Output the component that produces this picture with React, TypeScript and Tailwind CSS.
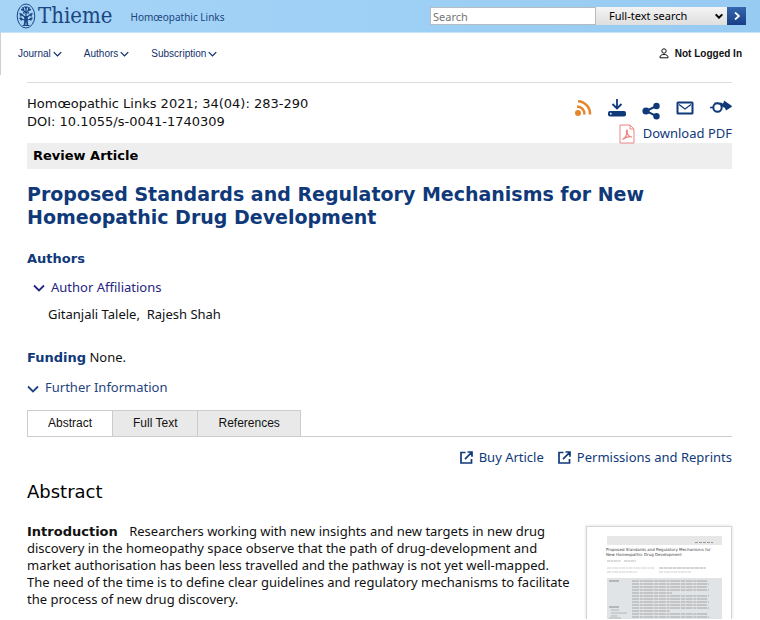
import React from "react";

const navItems = ["Journal", "Authors", "Subscription"];
const tabs = ["Abstract", "Full Text", "References"];

interface ChevronProps {
  className?: string;
}

const Chevron: React.FC<ChevronProps> = ({ className = "" }) => (
  <svg
    viewBox="0 0 12 8"
    fill="none"
    stroke="currentColor"
    strokeWidth="1.8"
    className={className}
    aria-hidden="true"
  >
    <path d="M1 1.5 6 6.5 11 1.5" />
  </svg>
);

const ExternalIcon = () => (
  <svg
    viewBox="0 0 13 13"
    fill="none"
    stroke="currentColor"
    strokeWidth="1.7"
    className="size-[13px]"
    aria-hidden="true"
  >
    <path d="M5.5 1.5H1v10.500h10.500V8M7.500 1H12v4.800M12 1 5 8.200" />
  </svg>
);

const TreeLogo = () => (
  <svg
    viewBox="0 0 20 26"
    fill="none"
    stroke="#1b4580"
    className="h-[26px] w-5"
    aria-hidden="true"
  >
    <ellipse cx="10" cy="13" rx="8.8" ry="12" strokeWidth="1" />
    <path d="M8.500 22c1-3 .8-6 .6-9M11.500 22c-1-3-.8-6-.6-9" strokeWidth="1.8" />
    <path
      d="M10 18V4M10 15 5 11M10 15l5-4M10 10 6 6M10 10l4-4M9 17l-5-1M11 17l5-1M6.500 22.500h7"
      strokeWidth="1.2"
    />
    <path
      d="M3.500 10.500l2 1-1 2M16.500 10.500l-2 1 1 2M5 6.500l2.500.5L7 4M15 6.500l-2.500.5.5-3M8.500 3.500 10 5l1.500-1.500M3.500 15l2 .5-.5 2M16.500 15l-2 .5.5 2M7 9.500l1.500 1M13 9.500l-1.500 1"
      strokeWidth="1.5"
    />
  </svg>
);

const Header = () => (
  <header className="flex h-8 items-center justify-between bg-linear-to-r from-[#a5d4f7] to-[#98cbf2] pr-3.5 pl-4 shadow-[0_1px_0_#c9e3f8]">
    <a href="#" className="flex items-center text-[#1b4580]">
      <TreeLogo />
      <span className="ml-0.5 font-['DejaVu_Serif_Condensed','DejaVu_Serif',serif] text-[22px] leading-8">
        Thieme
      </span>
      <span className="mt-0.5 ml-[18px] text-[10px]">Homœopathic Links</span>
    </a>
    <form className="flex items-center">
      <input
        type="text"
        aria-label="Search"
        placeholder="Search"
        className="h-[18px] w-[166px] border border-[#b5bcc4] bg-white px-0.5 text-[11px] placeholder:text-[#757575]"
      />
      <div className="relative flex">
        <select
          aria-label="Search scope"
          className="h-[18px] w-[131px] appearance-none bg-linear-to-b from-[#f4f4f4] to-[#dedede] pb-0.5 pl-[13px] text-[11px] text-black"
        >
          <option>Full-text search</option>
        </select>
        <Chevron className="pointer-events-none absolute top-1.5 right-1 h-1.5 w-2 stroke-3 text-black" />
      </div>
      <button
        type="button"
        aria-label="Start search"
        className="flex h-[18px] w-[19px] items-center justify-center bg-linear-to-b from-[#3467ad] to-[#173f86] text-white"
      >
        <svg
          viewBox="0 0 6 8"
          fill="none"
          stroke="currentColor"
          strokeWidth="1.8"
          className="h-2 w-1.5"
        >
          <path d="M1 .5 5 4 1 7.500" />
        </svg>
      </button>
    </form>
  </header>
);

const NavBar = () => (
  <nav className="flex h-[43px] items-center justify-between border-l border-[#cfcfcf] pr-[18px] pl-[17px] font-['Liberation_Sans',Arial,sans-serif] text-[10px]">
    <div className="flex gap-[22px] text-[#12306b]">
      {navItems.map((item) => (
        <button key={item} type="button" className="flex items-center gap-0.5">
          {item}
          <Chevron className="h-1.5 w-[9px]" />
        </button>
      ))}
    </div>
    <a href="#" className="flex items-center gap-1.5 font-bold text-[#111]">
      <svg
        viewBox="0 0 10 11"
        fill="none"
        stroke="currentColor"
        className="h-[11px] w-2.5"
        aria-hidden="true"
      >
        <circle cx="5" cy="3" r="2.200" />
        <path d="M1 9.800V9c0-1.500 1.500-2.500 4-2.500S9 7.500 9 9v.8z" />
      </svg>
      Not Logged In
    </a>
  </nav>
);

const ArticleActions = () => (
  <div className="flex flex-col items-end text-[#10397a]">
    <div className="flex h-[26px] items-center gap-4">
      <a href="#" aria-label="RSS feed" className="text-[#e5862c]">
        <svg
          viewBox="0 0 18 18"
          fill="none"
          stroke="currentColor"
          strokeWidth="2.500"
          className="size-[18px]"
        >
          <circle cx="4" cy="14" r="3" fill="currentColor" stroke="none" />
          <path d="M3 7.500a7.500 7.500 0 0 1 7.500 8M4 2.200a12.500 12.500 0 0 1 12 13.300" />
        </svg>
      </a>
      <a href="#" aria-label="Export citation">
        <svg viewBox="0 0 18 18" fill="none" stroke="currentColor" className="size-[18px]">
          <path d="M9 0v9M4.500 5 9 9.500 13.500 5" strokeWidth="1.800" />
          <rect x="0" y="12" width="18" height="5.500" rx="2" fill="currentColor" stroke="none" />
          <circle cx="2.800" cy="14.700" r=".9" fill="#fff" stroke="none" />
        </svg>
      </a>
      <a href="#" aria-label="Share" className="mt-1.5">
        <svg viewBox="0 0 18 18" fill="currentColor" className="size-[18px]">
          <path d="M14.500 4 4 9l10.500 5.200" fill="none" stroke="currentColor" strokeWidth="2" />
          <circle cx="14.500" cy="4" r="3.200" />
          <circle cx="4" cy="9" r="3.600" />
          <circle cx="14.500" cy="14.200" r="3.200" />
        </svg>
      </a>
      <a href="#" aria-label="Email">
        <svg viewBox="0 0 18 14" fill="none" stroke="currentColor" className="h-3.5 w-[18px]">
          <rect x="1.500" y="1.500" width="15" height="11" rx=".5" strokeWidth="2" />
          <path d="M3 3.500 9 8l6-4.500" strokeWidth="1.200" />
        </svg>
      </a>
      <a href="#" aria-label="Alerts">
        <svg viewBox="0 0 22 16" fill="none" stroke="currentColor" className="-mt-0.5 h-4 w-[22px]">
          <path
            d="M14 1.500 22 7l-.5 1-5.500 3.500L15 9l-3-1.500-1-2.500 2.500-1z"
            fill="currentColor"
            stroke="none"
          />
          <circle cx="7.500" cy="8.500" r="4.200" strokeWidth="2" />
          <path d="M0 8.500h3M4.500 4.200 12 4.500" strokeWidth="1.600" />
        </svg>
      </a>
    </div>
    <a href="#" className="flex h-6 items-center gap-2">
      <svg
        viewBox="0 0 16 20"
        fill="none"
        stroke="#ed8582"
        className="mt-0.5 h-5 w-4"
        aria-hidden="true"
      >
        <path d="M1 1h10l4 4v14H1zM11 1v4h4" />
        <path
          d="M3.500 15.500c3-1.500 4.500-5 4-8.500-.2-1.500 1.200-1 .8.500-.6 3 2 5.500 4.700 5.500-2.500-1-6 0-9.500 2.500z"
          strokeWidth="1.200"
        />
      </svg>
      Download PDF
    </a>
  </div>
);

const titleLines = [
  { y: 24, text: "Proposed Standards and Regulatory Mechanisms for" },
  { y: 29, text: "New Homeopathic Drug Development" },
];

// dash patterns stand in for the small print of the first page
const PagePreview = () => (
  <a
    href="#"
    aria-label="Article preview"
    className="block w-[146px] shrink-0 border border-b-0 border-[#d5d5d5] bg-white shadow-[0_0_3px_#ddd]"
  >
    <svg viewBox="0 0 144 92" className="block h-auto w-full">
      <rect x="20" y="9" width="115" height="9" fill="#e7e7e7" />
      <path d="M108 15.500h18" stroke="#999" strokeDasharray="3 1" />
      {titleLines.map(({ y, text }) => (
        <text
          key={y}
          x="19"
          y={y}
          fill="#444"
          className="font-['DejaVu_Sans',sans-serif] text-[4px]"
        >
          {text}
        </text>
      ))}
      <path d="M20 34h14M37 34h12" stroke="#b5b5b5" strokeDasharray="3 .5" />
      <path d="M20 41h48M20 45h30M72 45h32" stroke="#ccc" strokeDasharray="4 .7 2 .5" />
      <path d="M72 41h47" stroke="#aaa" strokeDasharray="4 .5" />
      <rect x="20" y="51" width="115" height="41" fill="#e1e4e7" />
      <path d="M22 54h10M22 80h10" stroke="#888" />
      <path d="M24 83h8M24 86h16M24 89h6M22 91h12" stroke="#b5b5b5" />
      <path
        d="M45 54h76M45 57h77M45 60h76M45 63h77M45 66h40M45 69h77M45 72h76M45 75h77M45 78h76M45 81h77M45 84h38M45 87h76M45 90h77"
        stroke="#a3a3a3"
        strokeWidth="1.200"
        strokeDasharray="7 .8 3 .6 10 .8 4 .6"
      />
    </svg>
  </a>
);

const App = () => (
  <div className="bg-white font-['Noto_Sans',Verdana,sans-serif] text-[13px] leading-[17px] text-[#111]">
    <Header />
    <NavBar />
    <main className="mt-[7px] mr-7 ml-[27px] border-t border-[#dcdcdc]">
      <div className="flex justify-between pt-3">
        <div className="font-['DejaVu_Sans',Verdana,sans-serif] leading-[18px]">
          <div>Homœopathic Links 2021; 34(04): 283-290</div>
          <div>DOI: 10.1055/s-0041-1740309</div>
        </div>
        <div className="h-12">
          <ArticleActions />
        </div>
      </div>
      <div className="h-[26px] bg-[#eeeeee] px-1.5 font-['DejaVu_Sans',Verdana,sans-serif] leading-[26px] font-bold text-black">
        Review Article
      </div>
      <h1 className="mt-3.5 font-['DejaVu_Sans',Verdana,sans-serif] text-[19px] leading-[23px] font-bold text-[#10397a]">
        Proposed Standards and Regulatory Mechanisms for New
        <br />
        Homeopathic Drug Development
      </h1>
      <h2 className="mt-[21px] font-['DejaVu_Sans',Verdana,sans-serif] font-bold text-[#10397a]">
        Authors
      </h2>
      <button type="button" className="mt-3 ml-1.5 flex items-center gap-1.5 text-[#26267f]">
        <Chevron className="h-2 w-3" />
        Author Affiliations
      </button>
      <p className="mt-2.5 ml-[21px]">Gitanjali Talele,&nbsp; Rajesh Shah</p>
      <p className="mt-[26px]">
        <strong className="font-['DejaVu_Sans',Verdana,sans-serif] text-[#10397a]">
          Funding
        </strong>{" "}
        None.
      </p>
      <button type="button" className="mt-[13px] flex items-center gap-1.5 text-[#1f4480]">
        <Chevron className="mt-0.5 h-2 w-3" />
        Further Information
      </button>
      <div
        role="tablist"
        className="mt-3.5 flex border-b border-[#cccccc] font-['Liberation_Sans',Arial,sans-serif] text-[12px]"
      >
        {tabs.map((tab, index) => (
          <button
            key={tab}
            type="button"
            role="tab"
            aria-selected={index === 0}
            className="h-[26px] border-t border-r border-[#cccccc] bg-[#e9e9e9] px-5 first:border-l first:bg-white"
          >
            {tab}
          </button>
        ))}
      </div>
      <div className="mt-3 flex justify-end gap-3.5 text-[#10397a]">
        <a href="#" className="flex items-center gap-1.5">
          <ExternalIcon />
          Buy Article
        </a>
        <a href="#" className="flex items-center gap-1.5">
          <ExternalIcon />
          Permissions and Reprints
        </a>
      </div>
      <h2 className="mt-3.5 font-['DejaVu_Sans',Verdana,sans-serif] text-[18px] leading-6 text-black">
        Abstract
      </h2>
      <div className="mt-[19px] flex items-start">
        <p className="min-w-0 flex-1">
          <strong className="mr-2 font-['DejaVu_Sans',Verdana,sans-serif]">
            Introduction
          </strong>{" "}
          Researchers working with new insights and new targets in new drug
          <br />
          discovery in the homeopathy space observe that the path of
          drug-development and
          <br />
          market authorisation has been less travelled and the pathway is not
          yet well-mapped.
          <br />
          The need of the time is to define clear guidelines and regulatory
          mechanisms to facilitate
          <br />
          the process of new drug discovery.
        </p>
        <div className="mt-[3px]">
          <PagePreview />
        </div>
      </div>
    </main>
  </div>
);

export default App;
